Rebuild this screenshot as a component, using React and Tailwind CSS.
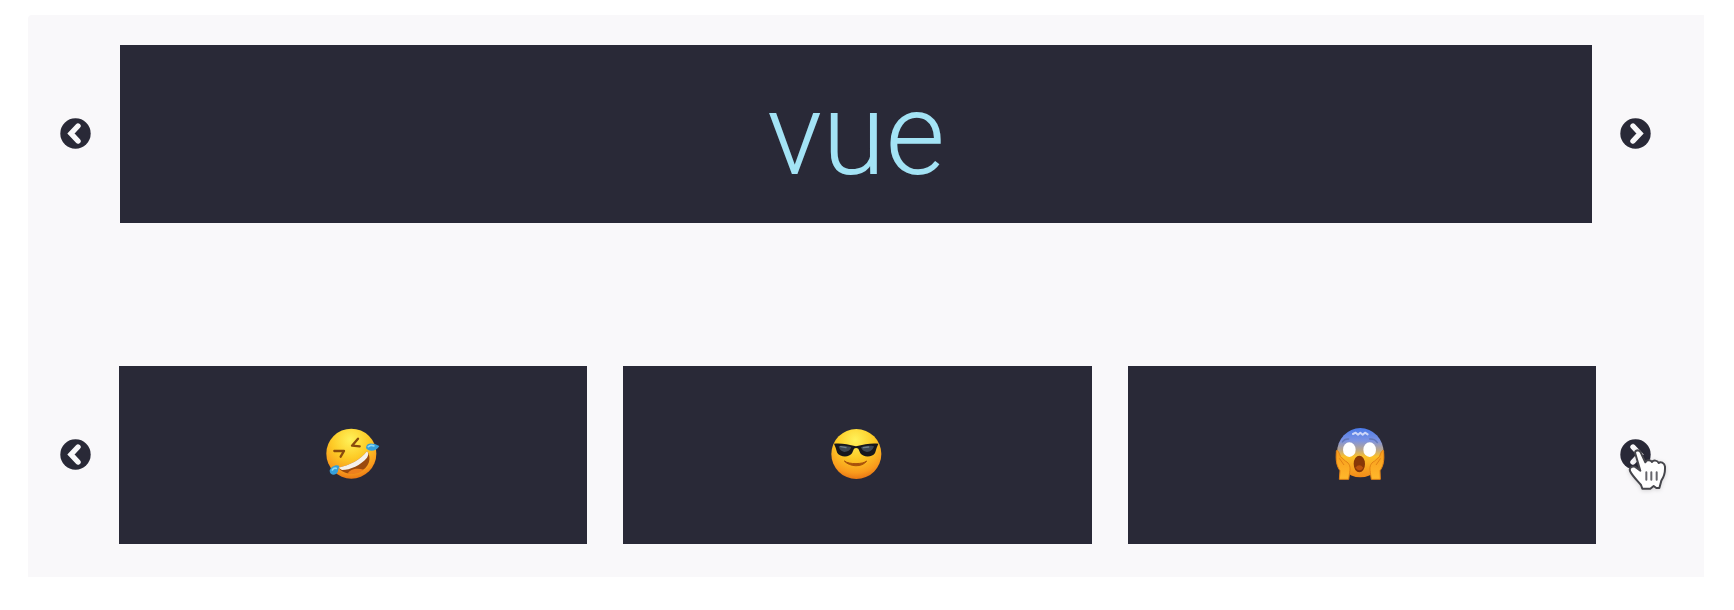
import { useState } from 'react';

const words = ['vue', 'react', 'angular'];

function ArrowButton({ direction, onClick, children }) {
  const points = direction === 'left' ? '18,8 11,15.5 18,23' : '13,8 20,15.5 13,23';

  return (
    <button
      type="button"
      onClick={onClick}
      aria-label={direction === 'left' ? 'Previous' : 'Next'}
      className="relative mb-0.5 size-[31px] shrink-0 cursor-pointer"
    >
      <svg viewBox="0 0 31 31" className="size-full" fill="none">
        <circle cx="15.5" cy="15.5" r="15.2" fill="#292937" />
        <polyline points={points} stroke="#f9f8fa" strokeWidth="5.4" strokeLinecap="round" />
      </svg>
      {children}
    </button>
  );
}

function HandCursor() {
  return (
    <svg
      viewBox="141 291 126 141"
      className="pointer-events-none absolute left-[7px] top-2 h-[47px] w-[42px] drop-shadow-sm"
      strokeLinejoin="round"
      strokeLinecap="round"
    >
      <path
        d="M166 311 C162 301 177 297 182 307 L196 337 C199 328 212 329 216 336 C220 329 233 331 236 339 C241 334 254 338 255 350 C256 368 251 382 244 392 L238 414 L229 414 L221 408 L211 416 L187 416 L183 405 C174 394 157 378 150 363 C146 351 162 345 170 354 L181 362 Z"
        fill="#fff"
        stroke="#45454b"
        strokeWidth="6"
      />
      <path d="M199 367 V389 M214 367 V389 M230 367 V389" stroke="#66666c" strokeWidth="6" />
    </svg>
  );
}

function FaceGradient({ id }) {
  return (
    <radialGradient id={id} cx="0.48" cy="0.22" r="0.82">
      <stop offset="0" stopColor="#fff25a" />
      <stop offset="0.45" stopColor="#fdcb26" />
      <stop offset="0.8" stopColor="#f99a1c" />
      <stop offset="1" stopColor="#e36c12" />
    </radialGradient>
  );
}

function RoflEmoji() {
  return (
    <svg viewBox="42 43 180 180" className="size-[60px]" role="img" aria-label="Rolling on the floor laughing">
      <defs>
        <FaceGradient id="rofl" />
      </defs>
      <circle cx="127" cy="129" r="75" fill="url(#rofl)" />
      <path d="M147 84 L129 105 L152 107" fill="none" stroke="#8a4b0c" strokeWidth="7" strokeLinecap="round" strokeLinejoin="round" />
      <path d="M76 121 L105 121 L95 138" fill="none" stroke="#8a4b0c" strokeWidth="7" strokeLinecap="round" strokeLinejoin="round" />
      <path d="M88 171 C124 164 154 147 174 122 C190 141 180 174 150 184 C126 193 101 188 88 171 Z" fill="#9b4a0d" />
      <path d="M88 171 C124 164 154 147 174 122 C180 128 178 135 174 141 C155 163 124 178 99 178 Z" fill="#f6f1ea" />
      <path d="M116 189 C123 173 147 171 164 177 C152 189 133 192 116 189 Z" fill="#ee801d" />
      <path d="M171 112 C171 96 190 95 211 106 C204 121 180 126 171 112 Z" fill="#359fda" />
      <path d="M91 166 C81 160 65 168 62 180 C62 194 80 197 86 184 Z" fill="#359fda" />
      <path d="M178 108 Q185 101 195 106 M70 178 Q74 171 82 173" fill="none" stroke="#8bd8f3" strokeWidth="5" strokeLinecap="round" />
    </svg>
  );
}

function SunglassesEmoji() {
  return (
    <svg viewBox="39 43 180 180" className="size-[60px]" role="img" aria-label="Smiling face with sunglasses">
      <defs>
        <FaceGradient id="cool" />
      </defs>
      <circle cx="127" cy="130" r="75" fill="url(#cool)" />
      <path d="M91 151 C107 169 145 171 158 151 C148 161 105 162 91 151 Z" fill="#a8510b" stroke="#a8510b" strokeWidth="3" strokeLinejoin="round" />
      <path d="M60 99 C80 97 101 100 126 107 C151 100 173 97 193 99 L190 107 C187 113 186 120 183 127 C177 140 147 141 139 128 L133 114 Q126 110 120 114 L114 128 C106 141 78 140 70 127 C67 120 66 113 63 107 Z" fill="#17171c" />
      <path d="M74 107 C84 104 101 106 112 110 C109 119 101 124 91 124 C80 122 76 114 74 107 Z M141 110 C153 106 168 104 180 107 C177 117 169 124 159 124 C148 122 143 117 141 110 Z" fill="#3d4753" />
      <path d="M80 108 L96 111 M148 111 L164 109" stroke="#70808a" strokeWidth="4" strokeLinecap="round" />
    </svg>
  );
}

function ScreamEmoji() {
  return (
    <svg viewBox="51 43 180 180" className="size-[60px]" role="img" aria-label="Face screaming in fear">
      <defs>
        <linearGradient id="scream" x1="0" y1="0" x2="0" y2="1">
          <stop offset="0" stopColor="#4b7bea" />
          <stop offset="0.26" stopColor="#7d93e2" />
          <stop offset="0.44" stopColor="#b9a58c" />
          <stop offset="0.58" stopColor="#fcc129" />
          <stop offset="1" stopColor="#f28a18" />
        </linearGradient>
        <linearGradient id="hands" x1="0" y1="0" x2="0" y2="1">
          <stop offset="0" stopColor="#f79b1b" />
          <stop offset="1" stopColor="#ffb82b" />
        </linearGradient>
      </defs>
      <ellipse cx="136" cy="126" rx="70" ry="74" fill="url(#scream)" />
      <path d="M114 70 L122 66 L129 72 L136 66 L143 72 L150 66 L158 71" fill="none" stroke="#cdd6f8" strokeWidth="6" strokeLinecap="round" strokeLinejoin="round" />
      <path d="M82 94 Q88 84 101 85 M164 85 Q180 84 187 96" fill="none" stroke="#6378b8" strokeWidth="4" strokeLinecap="round" />
      <ellipse cx="103" cy="117" rx="19" ry="22" fill="#fff" />
      <ellipse cx="164" cy="117" rx="19" ry="22" fill="#fff" />
      <ellipse cx="133" cy="160" rx="17" ry="25" fill="#873707" />
      <path d="M121 171 Q133 157 145 171 Q134 187 121 171 Z" fill="#b9510d" />
      <path d="M64 126 C63 110 73 124 76 137 L91 151 C105 158 107 171 104 185 L101 206 L73 206 L75 180 C65 166 62 149 64 126 Z" fill="url(#hands)" stroke="#e38315" strokeWidth="3" />
      <path d="M206 126 C207 110 197 124 194 137 L179 151 C165 158 163 171 166 185 L169 206 L196 206 L195 180 C205 166 208 149 206 126 Z" fill="url(#hands)" stroke="#e38315" strokeWidth="3" />
      <path d="M73 143 L87 163 M197 143 L183 163" stroke="#e38315" strokeWidth="3" />
    </svg>
  );
}

const faces = [RoflEmoji, SunglassesEmoji, ScreamEmoji];

export default function App() {
  const [word, setWord] = useState(0);
  const [offset, setOffset] = useState(0);

  const moveWord = step => setWord((word + step + words.length) % words.length);
  const moveFaces = step => setOffset((offset + step + faces.length) % faces.length);

  return (
    <div className="bg-white pt-[15px] pb-8 pl-7 pr-[30px]">
      <main className="flex flex-col gap-[143px] rounded-tl bg-[#f9f8fa] pt-[30px] pb-[33px] pl-8 pr-[53px]">
        <section className="flex items-center" aria-label="Frameworks">
          <ArrowButton direction="left" onClick={() => moveWord(-1)} />
          <div className="ml-[29px] mr-7 flex h-[178px] flex-1 items-center justify-center bg-[#292937]">
            <h1 className="font-[Roboto,sans-serif] text-[115px] leading-none font-light text-[#a3e3f5]">
              {words[word]}
            </h1>
          </div>
          <ArrowButton direction="right" onClick={() => moveWord(1)} />
        </section>

        <section className="flex items-center" aria-label="Emojis">
          <ArrowButton direction="left" onClick={() => moveFaces(-1)} />
          <div className="ml-7 mr-6 grid flex-1 grid-cols-3 gap-9">
            {faces.map((_, i) => {
              const Face = faces[(i + offset) % faces.length];
              return (
                <div key={i} className="flex h-[178px] items-center justify-center bg-[#292937]">
                  <Face />
                </div>
              );
            })}
          </div>
          <ArrowButton direction="right" onClick={() => moveFaces(1)}>
            <HandCursor />
          </ArrowButton>
        </section>
      </main>
    </div>
  );
}
